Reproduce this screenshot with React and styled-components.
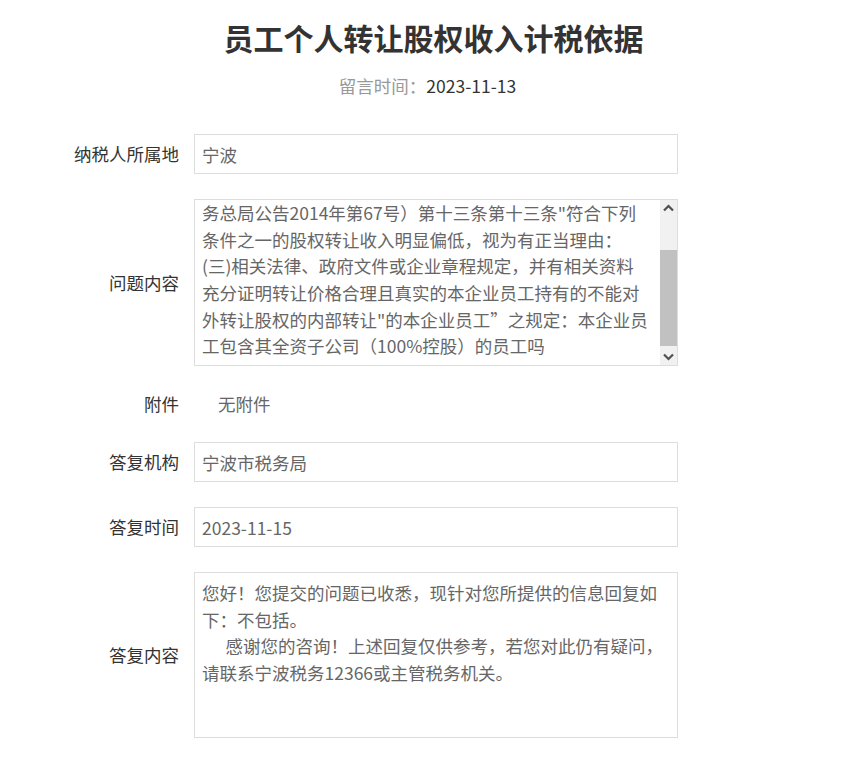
import { useEffect, useRef, useState } from "react";
import styled, { createGlobalStyle } from "styled-components";

const GlobalStyle = createGlobalStyle`
  html, body {
    margin: 0;
    padding: 0;
    background: #fff;
  }
  body {
    font-family: "Microsoft YaHei", "Noto Sans CJK SC", "Noto Sans", sans-serif;
    color: #333;
  }
  * {
    box-sizing: border-box;
  }
`;

const question =
  "员工个人转让股权，根据《股权转让所得个人所得税管理\n" +
  "办法（试行）》（国家税\n" +
  "务总局公告2014年第67号）第十三条第十三条\"符合下列\n" +
  "条件之一的股权转让收入明显偏低，视为有正当理由：\n" +
  "(三)相关法律、政府文件或企业章程规定，并有相关资料\n" +
  "充分证明转让价格合理且真实的本企业员工持有的不能对\n" +
  "外转让股权的内部转让\"的本企业员工”之规定：本企业员\n" +
  "工包含其全资子公司（100%控股）的员工吗";

const answer =
  "您好！您提交的问题已收悉，现针对您所提供的信息回复如下：不包括。\n" +
  "      感谢您的咨询！上述回复仅供参考，若您对此仍有疑问，请联系宁波税务12366或主管税务机关。";

function Chevron({ up }) {
  return (
    <svg width="17" height="17" viewBox="0 0 17 17">
      <path
        d={up ? "M4 10.5l4.5-4.5 4.5 4.5" : "M4 6.5l4.5 4.5 4.5-4.5"}
        fill="none"
        stroke="#505050"
        strokeWidth="2.2"
      />
    </svg>
  );
}

function ScrollText({ text, height }) {
  const textRef = useRef(null);
  const [ratio, setRatio] = useState(1);

  useEffect(() => {
    const el = textRef.current;
    if (!el) return;
    el.scrollTop = el.scrollHeight;
    setRatio(el.clientHeight / el.scrollHeight);
  }, [text]);

  const trackHeight = height - 2 - 34;

  return (
    <ScrollBox $height={height}>
      <ScrollContent ref={textRef}>{text}</ScrollContent>
      <ScrollBar>
        <ArrowButton>
          <Chevron up />
        </ArrowButton>
        <Track>
          <Thumb style={{ height: Math.round(trackHeight * ratio) }} />
        </Track>
        <ArrowButton>
          <Chevron />
        </ArrowButton>
      </ScrollBar>
    </ScrollBox>
  );
}

export default function App() {
  return (
    <Page>
      <GlobalStyle />
      <Header>
        <Title>员工个人转让股权收入计税依据</Title>
        <Meta>
          <MetaLabel>留言时间：</MetaLabel>
          2023-11-13
        </Meta>
      </Header>

      <Form>
        <Label>纳税人所属地</Label>
        <Field readOnly value="宁波" />

        <Label>问题内容</Label>
        <ScrollText text={question} height={167} />

        <Label>附件</Label>
        <Plain>无附件</Plain>

        <Label>答复机构</Label>
        <Field readOnly value="宁波市税务局" />

        <Label>答复时间</Label>
        <Field readOnly value="2023-11-15" />

        <Label>答复内容</Label>
        <Area readOnly value={answer} $height={166} />
      </Form>
    </Page>
  );
}

const Page = styled.div`
  width: 855px;
  padding-bottom: 30px;
`;

const Header = styled.header`
  text-align: center;
  padding-top: 15px;
`;

const Title = styled.h1`
  margin: 0;
  padding-left: 12px;
  font-size: 30px;
  line-height: 44px;
  font-weight: 700;
  color: #333;
`;

const Meta = styled.div`
  margin-top: 14px;
  font-size: 17.5px;
  line-height: 26px;
  color: #333;
`;

const MetaLabel = styled.span`
  color: #999;
`;

const Form = styled.div`
  margin-top: 35px;
  display: grid;
  grid-template-columns: 179px 484px;
  column-gap: 15px;
  row-gap: 25px;
  align-items: center;
`;

const Label = styled.div`
  text-align: right;
  font-size: 17.5px;
  line-height: 26px;
  color: #333;
`;

const Field = styled.input`
  display: block;
  width: 484px;
  height: 40px;
  margin: 0;
  padding: 0 7px;
  border: 1px solid #ddd;
  border-radius: 0;
  outline: none;
  background: #fff;
  font-family: inherit;
  font-size: 17.5px;
  color: #666;
`;

const Area = styled.textarea`
  display: block;
  width: 484px;
  height: ${(p) => p.$height}px;
  margin: 0;
  padding: 7px 7px 5px 7px;
  border: 1px solid #ddd;
  border-radius: 0;
  outline: none;
  resize: none;
  background: #fff;
  font-family: inherit;
  font-size: 17.5px;
  line-height: 26.6px;
  color: #666;
  overflow: hidden;
`;

const ScrollBox = styled.div`
  display: flex;
  width: 484px;
  height: ${(p) => p.$height}px;
  border: 1px solid #ddd;
  background: #fff;
`;

const ScrollContent = styled.div`
  flex: 1;
  overflow: hidden;
  padding: 7px 7px 5px 7px;
  white-space: pre-wrap;
  font-size: 17.5px;
  line-height: 26.6px;
  color: #666;
`;

const ScrollBar = styled.div`
  width: 17px;
  flex: none;
  display: flex;
  flex-direction: column;
  background: #f1f1f1;
`;

const ArrowButton = styled.div`
  height: 17px;
  flex: none;
  display: flex;
  align-items: center;
  justify-content: center;
`;

const Track = styled.div`
  flex: 1;
  display: flex;
  flex-direction: column;
  justify-content: flex-end;
  padding-bottom: 2px;
`;

const Thumb = styled.div`
  width: 100%;
  background: #c1c1c1;
`;

const Plain = styled.div`
  padding-left: 24px;
  font-size: 17.5px;
  line-height: 26px;
  color: #666;
`;
